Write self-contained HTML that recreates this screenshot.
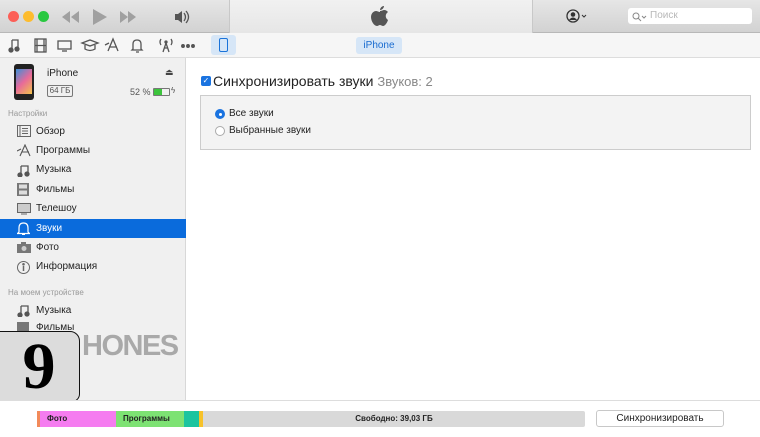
<!DOCTYPE html>
<html><head><meta charset="utf-8"><style>
*{box-sizing:border-box;margin:0;padding:0}
body{width:760px;height:437px;overflow:hidden;font-family:"Liberation Sans",sans-serif;background:#fff;position:relative;font-size:10px;color:#222}
.abs{position:absolute}
.title{left:0;top:0;width:760px;height:33px;background:linear-gradient(#e6e6e6,#d2d2d2);border-bottom:1px solid #b8b8b8}
.mid{left:229px;top:0;width:304px;height:33px;background:linear-gradient(#f1f1f1,#e6e6e6);border-left:1px solid #c8c8c8;border-right:1px solid #c8c8c8}
.dot{width:11px;height:11px;border-radius:50%;top:11px}
.tool{left:0;top:33px;width:760px;height:25px;background:#f6f6f6;border-bottom:1px solid #ddd}
.side{left:0;top:58px;width:186px;height:342px;background:#f0f0f0;border-right:1px solid #d8d8d8}
.it{position:absolute;left:36px;font-size:10px;color:#222}
.ic{position:absolute;left:17px}
.hd{position:absolute;left:8px;font-size:8px;color:#999}
.bot{left:0;top:400px;width:760px;height:37px;background:#fff;border-top:1px solid #ddd}
.seg{position:absolute;top:411px;height:16px;font-size:8px;font-weight:bold;line-height:16px;padding-left:7px}
</style></head><body>
<div class="abs title"></div>
<div class="abs mid"></div>
<div class="abs dot" style="left:8px;background:#fc5f57"></div>
<div class="abs dot" style="left:23px;background:#fdbc2e"></div>
<div class="abs dot" style="left:38px;background:#29c840"></div>
<svg class="abs" style="left:60px;top:8px" width="130" height="18" viewBox="0 0 130 18" fill="#a0a0a0">
<path d="M10 3L2 9l8 6zM19 3l-8 6 8 6z"/><path d="M33 1v16l14-8z"/><path d="M60 3l8 6-8 6zM68 3l8 6-8 6z"/>
<path d="M115 6h3l4-3v12l-4-3h-3z" fill="#555"/><path d="M124 5q3 4 0 8M126 3q5 6 0 12" stroke="#555" stroke-width="1.3" fill="none"/></svg>
<svg class="abs" style="left:371px;top:5px" width="18" height="22" viewBox="0 0 18 22"><path d="M9 6c2-0 3-1 4-1 2 0 3 1 4 2-3 2-3 6 0 8-1 3-3 6-5 6-1 0-2-1-3-1s-2 1-3 1C3 21 0 16 0 12c0-4 3-6 5-6 1 0 3 1 4 1z" fill="#555"/><path d="M9 5c0-2 2-4 4-4 0 2-2 4-4 4z" fill="#555"/></svg>
<svg class="abs" style="left:566px;top:9px" width="24" height="14"><circle cx="7" cy="7" r="6" fill="none" stroke="#333" stroke-width="1.3"/><circle cx="7" cy="5.5" r="2.3" fill="#333"/><path d="M3 11q4-5 8 0" fill="#333"/><path d="M16 6l2 2 2-2" stroke="#333" fill="none"/></svg>
<div class="abs" style="left:628px;top:8px;width:124px;height:16px;background:#fff;border-radius:3px;font-size:10px;color:#b8b8b8;line-height:16px;padding-left:22px">Поиск</div>
<svg class="abs" style="left:632px;top:12px" width="16" height="10"><circle cx="4" cy="4" r="3" fill="none" stroke="#888"/><path d="M6 6l3 3M10 4l2 2 2-2" stroke="#888" fill="none"/></svg>
<div class="abs tool"></div>
<svg class="abs" style="left:8px;top:37px" width="200" height="17" viewBox="0 0 200 17" fill="none" stroke="#555" stroke-width="1.3">
<path d="M4 3h6v9M4 3v10" /><circle cx="3" cy="13" r="2" fill="#555"/><circle cx="9" cy="12" r="2" fill="#555"/>
<rect x="27" y="2" width="11" height="13"/><path d="M27 8.5h11M29 2v13M36 2v13"/>
<rect x="50" y="4" width="13" height="8"/><path d="M54 14h5"/>
<path d="M74 6l8-3 8 3-8 3zM77 8v4q5 3 10 0V8"/>
<path d="M100 14l5-12 5 12M101 10h8M97 8l4-2"/>
<path d="M125 12V7q0-4 4-4t4 4v5l1 1h-10zM128 15h3"/>
<path d="M155 15l3-9 3 9M156 11h4"/><circle cx="158" cy="5" r="1" fill="#555"/><path d="M153 2q-2 3 0 6M163 2q2 3 0 6"/>
<circle cx="175" cy="9" r="1.3" fill="#555"/><circle cx="180" cy="9" r="1.3" fill="#555"/><circle cx="185" cy="9" r="1.3" fill="#555"/></svg>
<div class="abs" style="left:211px;top:35px;width:25px;height:20px;background:#d6e6f7;border-radius:3px"></div>
<div class="abs" style="left:219px;top:38px;width:9px;height:14px;border:1.5px solid #1a73d9;border-radius:2px"></div>
<div class="abs" style="left:356px;top:37px;width:46px;height:17px;background:#d6e6f7;border-radius:3px;color:#1a6cd0;font-size:10px;text-align:center;line-height:17px">iPhone</div>
<div class="abs side"></div>
<div class="abs" style="left:14px;top:64px;width:20px;height:36px;background:#222;border-radius:3px"></div>
<div class="abs" style="left:16px;top:69px;width:16px;height:25px;background:linear-gradient(135deg,#3a8fd8,#e86a9a,#f2c34a)"></div>
<div class="abs" style="left:47px;top:68px;font-size:10px">iPhone</div>
<div class="abs" style="left:47px;top:85px;width:26px;height:12px;border:1px solid #777;border-radius:2px;font-size:8px;color:#555;text-align:center;line-height:10px">64 ГБ</div>
<div class="abs" style="left:165px;top:67px;font-size:9px;color:#444">⏏</div>
<div class="abs" style="left:130px;top:87px;font-size:9px;color:#555">52 %</div>
<div class="abs" style="left:153px;top:88px;width:17px;height:8px;border:1px solid #777;border-radius:1px"><div style="width:8px;height:6px;background:#3cc43c"></div></div>
<div class="abs" style="left:171px;top:86px;font-size:8px;color:#555">ϟ</div>
<div class="hd" style="top:109px">Настройки</div>
<div class="abs" style="left:0;top:219px;width:186px;height:19px;background:#0a6bdc"></div>
<svg class="ic" style="top:125px" width="14" height="12" fill="none" stroke="#666"><rect x="0.5" y="0.5" width="13" height="11"/><path d="M3 1v10M5 3.5h6M5 6h6M5 8.5h6"/></svg><div class="it" style="top:126px">Обзор</div>
<svg class="ic" style="top:144px" width="14" height="13" fill="none" stroke="#555" stroke-width="1.1"><path d="M3 12l5-11 5 11M5 8h7M0 7l4-2"/></svg><div class="it" style="top:145px">Программы</div>
<svg class="ic" style="top:164px" width="13" height="13" fill="none" stroke="#555" stroke-width="1.3"><path d="M4 2h7v8M4 2v9"/><circle cx="3" cy="11" r="2" fill="#555"/><circle cx="10" cy="10" r="2" fill="#555"/></svg><div class="it" style="top:164px">Музыка</div>
<svg class="ic" style="top:183px" width="12" height="13" fill="#777"><rect x="0" y="0" width="12" height="13"/><rect x="2" y="1.5" width="8" height="4" fill="#ddd"/><rect x="2" y="7.5" width="8" height="4" fill="#ddd"/></svg><div class="it" style="top:184px">Фильмы</div>
<svg class="ic" style="top:203px" width="14" height="12"><rect x="0.5" y="0.5" width="13" height="9" fill="#ccc" stroke="#666"/><path d="M4 11h6" stroke="#666"/></svg><div class="it" style="top:203px">Телешоу</div>
<svg class="ic" style="top:222px" width="13" height="13" fill="none" stroke="#fff" stroke-width="1.2"><path d="M2 10V6q0-5 4.5-5T11 6v4l1.5 1.5h-12zM5 12.5h3"/></svg><div class="it" style="top:223px;color:#fff">Звуки</div>
<svg class="ic" style="top:242px" width="14" height="11"><rect x="0" y="2" width="14" height="9" fill="#777"/><rect x="4" y="0" width="5" height="3" fill="#777"/><circle cx="7" cy="6.5" r="2.5" fill="#ccc"/></svg><div class="it" style="top:242px">Фото</div>
<svg class="ic" style="top:261px" width="13" height="13" fill="none" stroke="#666"><circle cx="6.5" cy="6.5" r="6"/><path d="M6.5 5v5" stroke-width="1.5"/><circle cx="6.5" cy="3.3" r="0.8" fill="#666"/></svg><div class="it" style="top:261px">Информация</div>
<div class="hd" style="top:288px">На моем устройстве</div>
<svg class="ic" style="top:304px" width="13" height="13" fill="none" stroke="#555" stroke-width="1.3"><path d="M4 2h7v8M4 2v9"/><circle cx="3" cy="11" r="2" fill="#555"/><circle cx="10" cy="10" r="2" fill="#555"/></svg><div class="it" style="top:305px">Музыка</div>
<svg class="ic" style="top:322px" width="12" height="10" fill="#777"><rect x="0" y="0" width="12" height="10"/></svg>
<div class="it" style="top:322px">Фильмы</div>
<div class="abs" style="left:82px;top:330px;font-size:29px;font-weight:bold;color:#a9a9a9;letter-spacing:-1.5px">HONES</div>
<div class="it" style="top:381px;left:70px">ги</div>
<div class="abs" style="left:-2px;top:331px;width:82px;height:71px;background:#dcdcdc;border:1.5px solid #111;border-radius:0 10px 8px 0;font-family:'Liberation Serif',serif;font-weight:bold;font-size:66px;text-align:center;line-height:70px;color:#000">9</div>
<div class="abs" style="left:201px;top:76px;width:10px;height:10px;background:#1a73e0;border-radius:2px;color:#fff;font-size:8px;line-height:10px;text-align:center">✓</div>
<div class="abs" style="left:213px;top:73px;font-size:14px;color:#222">Синхронизировать звуки <span style="color:#888;font-size:13px">Звуков: 2</span></div>
<div class="abs" style="left:200px;top:95px;width:551px;height:55px;background:#f3f3f3;border:1px solid #ccc"></div>
<div class="abs" style="left:215px;top:109px;width:10px;height:10px;border-radius:50%;background:#1a73e0"><div style="margin:3.5px;width:3px;height:3px;border-radius:50%;background:#fff"></div></div>
<div class="abs" style="left:229px;top:108px;font-size:10px">Все звуки</div>
<div class="abs" style="left:215px;top:126px;width:10px;height:10px;border-radius:50%;background:#fff;border:1px solid #aaa"></div>
<div class="abs" style="left:229px;top:125px;font-size:10px">Выбранные звуки</div>
<div class="abs bot"></div>
<div class="abs" style="left:37px;top:411px;width:548px;height:16px;background:#d9d9d9;border-radius:2px"></div>
<div class="seg" style="left:37px;width:3px;background:#f28a5a;padding:0"></div>
<div class="seg" style="left:40px;width:76px;background:#f57cf0">Фото</div>
<div class="seg" style="left:116px;width:68px;background:#7de273">Программы</div>
<div class="seg" style="left:184px;width:15px;background:#1cc49f;padding:0"></div>
<div class="seg" style="left:199px;width:4px;background:#f7c22a;padding:0"></div>
<div class="abs" style="left:203px;top:411px;width:382px;height:16px;font-size:8px;font-weight:bold;line-height:16px;text-align:center">Свободно: 39,03 ГБ</div>
<div class="abs" style="left:596px;top:410px;width:128px;height:17px;border:1px solid #c8c8c8;border-radius:3px;background:#fff;font-size:10px;text-align:center;line-height:15px">Синхронизировать</div>
</body></html>
